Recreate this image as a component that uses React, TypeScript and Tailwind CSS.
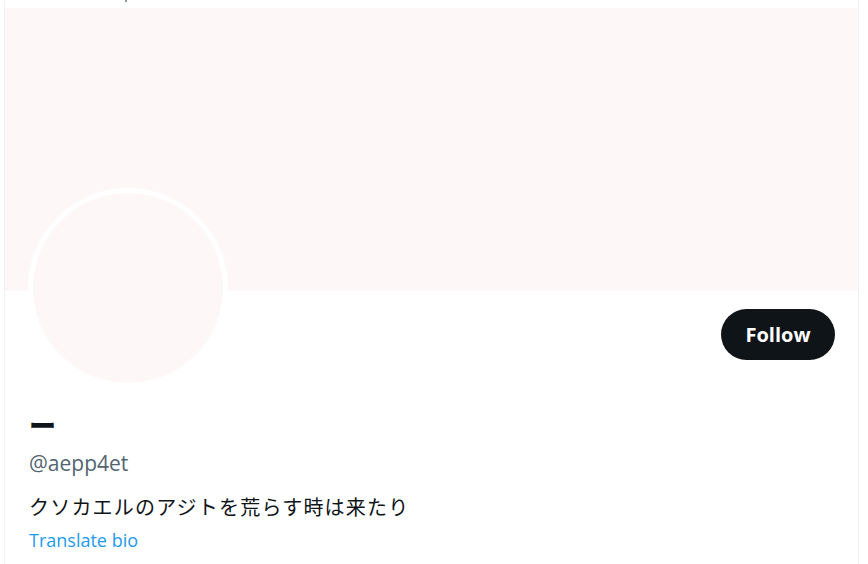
import React from "react";

export default function App() {
  const font = { fontFamily: '"Segoe UI", "Open Sans", "Noto Sans CJK JP", sans-serif' };
  return (
    <div className="w-[868px] h-[564px] bg-white overflow-hidden pl-[4px] pr-[9px]" style={font}>
      <div className="h-full border-x border-[#eff3f4] flex flex-col">
        <div className="h-[8px] flex">
          <span className="ml-[120px] w-[2px] h-[2px] bg-[#8b98a5]" />
        </div>
        <div className="h-[283px] bg-[#fdf7f7] shrink-0" />
        <div className="px-[23px] flex justify-between items-start">
          <div className="-mt-[103px] w-[200px] h-[200px] rounded-full border-[5px] border-white bg-[#fdf7f7]" />
          <button className="mt-[18px] w-[114px] h-[51px] rounded-full bg-[#0f1419] text-white text-[20px] font-bold flex items-center justify-center">
            Follow
          </button>
        </div>
        <div className="px-[24px] flex flex-col">
          <div className="mt-[20px] h-[34px] leading-[34px] text-[27px] font-extrabold text-[#0f1419]" style={{ fontFamily: '"Noto Sans CJK JP", sans-serif' }}>
            ー
          </div>
          <div className="mt-[8px] leading-[26px] text-[21px] text-[#536471]">@aepp4et</div>
          <div className="mt-[17px] leading-[28px] text-[20px] tracking-[1.2px] text-[#0f1419]" style={{ fontFamily: '"Noto Sans CJK JP", sans-serif' }}>
            クソカエルのアジトを荒らす時は来たり
          </div>
          <div className="mt-[6px] leading-[26px] text-[18px] text-[#1d9bf0]">Translate bio</div>
        </div>
      </div>
    </div>
  );
}
